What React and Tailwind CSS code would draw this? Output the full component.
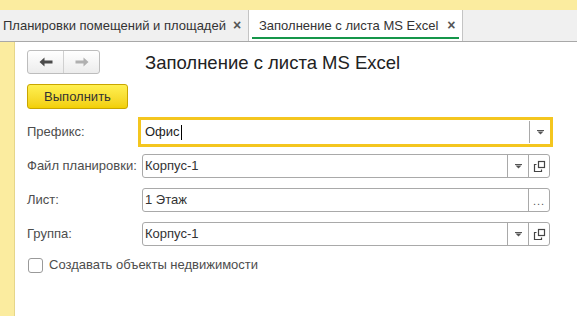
import React from 'react';

const FONT = { fontFamily: '"Liberation Sans", Arial, sans-serif' };

function DropArrow() {
  return (
    <svg width="7" height="5" viewBox="0 0 7 5">
      <rect x="0" y="0" width="7" height="1" fill="#555" />
      <path d="M0.5 1.5 H6.5 L3.5 4.5 Z" fill="#555" />
    </svg>
  );
}

function OpenIcon() {
  return (
    <svg width="13" height="13" viewBox="0 0 13 13" fill="none" stroke="#444" strokeWidth="1.2">
      <rect x="5.5" y="1.5" width="6" height="6" />
      <path d="M3.5 4.5 H1.5 V11.5 H8.5 V9.5" />
    </svg>
  );
}

function ArrowIcon({ dir, color }) {
  return (
    <svg width="14" height="10" viewBox="0 0 14 10" style={{ transform: dir === 'right' ? 'scaleX(-1)' : 'none' }}>
      <path d="M0.5 5 L5.5 0.5 V3.5 H13.5 V6.5 H5.5 V9.5 Z" fill={color} />
    </svg>
  );
}

function Field({ value, buttons }) {
  return (
    <div className="flex h-[24px] w-[408px] items-stretch rounded-[3px] border border-[#a9a9a9] bg-white">
      <div className="flex flex-1 items-center pl-[2px] text-[13px] text-[#333]">{value}</div>
      {buttons.map((b, i) => (
        <div key={i} className="flex w-[21px] items-center justify-center border-l border-[#a9a9a9]">
          {b === 'drop' && <DropArrow />}
          {b === 'open' && <OpenIcon />}
          {b === 'dots' && <span className="mt-[2px] text-[11px] leading-none tracking-[1px] text-[#555]">...</span>}
        </div>
      ))}
    </div>
  );
}

function Row({ label, children }) {
  return (
    <div className="flex h-[34px] items-center">
      <div className="w-[115px] text-[13px] text-[#4d4d4d]">{label}</div>
      {children}
    </div>
  );
}

export default function App() {
  return (
    <div className="flex h-[316px] w-[577px] flex-col overflow-hidden bg-white" style={FONT}>
      {/* top strip */}
      <div className="h-[10px] bg-[#fbec9f]" />

      {/* tabs */}
      <div className="flex h-[32px] border-b border-[#a8a8a8] bg-[#f0f0f0]">
        <div className="flex w-[249px] items-center border-r border-[#c4c4c4] pl-[3px] text-[13px] text-[#333]">
          <span>Планировки помещений и площадей</span>
          <span className="ml-[7px] text-[14px] font-bold text-[#555]">×</span>
        </div>
        <div className="relative flex w-[214px] items-center border-r border-[#c4c4c4] bg-white pl-[10px] text-[13px] text-[#333]">
          <span>Заполнение с листа MS Excel</span>
          <span className="ml-[9px] text-[14px] font-bold text-[#555]">×</span>
          <div className="absolute bottom-[2px] left-[3px] right-[3px] h-[2px] bg-[#15964a]" />
        </div>
      </div>

      <div className="flex flex-1">
        {/* left strip */}
        <div className="w-[15px] border-r border-[#e6d68a] bg-[#fbec9f]" />

        <div className="flex flex-1 flex-col pl-[12px] pt-[8px]">
          <div className="flex h-[24px] items-center">
            <div className="flex h-[24px] w-[73px] rounded-[3px] border border-[#bdbdbd] bg-gradient-to-b from-white to-[#ececec]">
              <div className="flex flex-1 items-center justify-center border-r border-[#d0d0d0]">
                <ArrowIcon dir="left" color="#4a4a4a" />
              </div>
              <div className="flex flex-1 items-center justify-center">
                <ArrowIcon dir="right" color="#b0b0b0" />
              </div>
            </div>
            <div className="ml-[45px] mt-[3px] text-[18.5px] leading-none text-[#222]">Заполнение с листа MS Excel</div>
          </div>

          <div className="mt-[10px] flex h-[25px] w-[101px] items-center justify-center rounded-[3px] border border-[#c9a600] bg-gradient-to-b from-[#fff04f] to-[#f2cf00] text-[13px] text-[#333]">
            Выполнить
          </div>

          <div className="mt-[6px] flex flex-col">
            <Row label="Префикс:">
              <div className="-ml-[4px] flex h-[30px] w-[415px] items-stretch border-[3px] border-[#f4c61f] bg-white">
                <div className="flex flex-1 items-center pl-[4px] text-[13px] text-[#222]">
                  Офис<span className="ml-[1px] inline-block h-[15px] w-[1px] bg-black" />
                </div>
                <div className="my-[1px] flex w-[21px] items-center justify-center border-l border-[#a9a9a9]">
                  <DropArrow />
                </div>
              </div>
            </Row>
            <Row label="Файл планировки:">
              <Field value="Корпус-1" buttons={['drop', 'open']} />
            </Row>
            <Row label="Лист:">
              <Field value="1 Этаж" buttons={['dots']} />
            </Row>
            <Row label="Группа:">
              <Field value="Корпус-1" buttons={['drop', 'open']} />
            </Row>
            <div className="flex h-[28px] items-center">
              <div className="ml-[1px] h-[15px] w-[15px] rounded-[3px] border border-[#9a9a9a] bg-white" />
              <span className="ml-[6px] text-[13px] text-[#4d4d4d]">Создавать объекты недвижимости</span>
            </div>
          </div>
        </div>
      </div>
    </div>
  );
}
